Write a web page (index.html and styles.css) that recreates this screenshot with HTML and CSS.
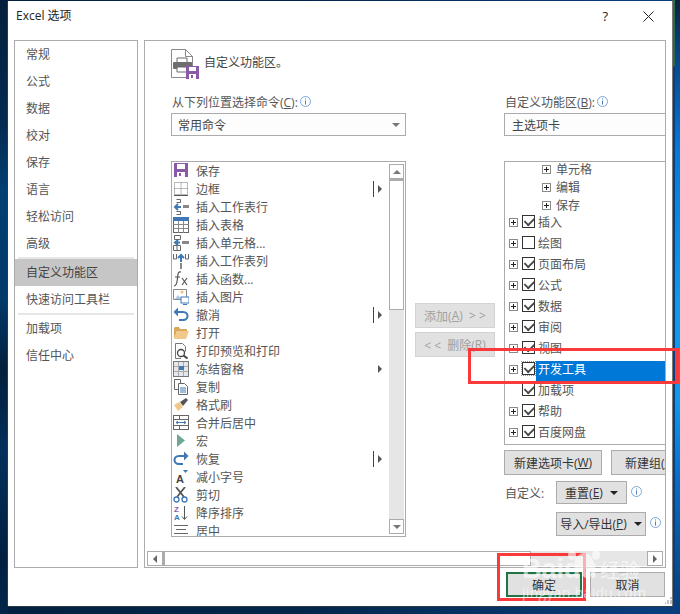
FILE: index.html
```html
<!DOCTYPE html>
<html lang="zh-CN">
<head>
<meta charset="utf-8">
<title>Excel 选项</title>
<link rel="stylesheet" href="styles.css">
</head>
<body>
<div class="window">
  <header class="titlebar">
    <span class="title">Excel 选项</span>
    <span class="help">?</span>
    <svg class="close" width="11" height="11" viewBox="0 0 11 11"><path d="M.5.5l10 10M10.500.5l-10 10" stroke="#222" fill="none"/></svg>
  </header>
  <div class="main">
    <nav class="nav">
      <div class="nav-item">常规</div>
      <div class="nav-item">公式</div>
      <div class="nav-item">数据</div>
      <div class="nav-item">校对</div>
      <div class="nav-item">保存</div>
      <div class="nav-item">语言</div>
      <div class="nav-item">轻松访问</div>
      <div class="nav-item">高级</div>
      <div class="nav-sep"></div>
      <div class="nav-item selected">自定义功能区</div>
      <div class="nav-item">快速访问工具栏</div>
      <div class="nav-sep"></div>
      <div class="nav-item">加载项</div>
      <div class="nav-item">信任中心</div>
    </nav>
    <section class="panel">
      <div class="heading">
        <svg width="28" height="30" viewBox="0 0 28 30"><path d="M.5.5h14l7 7v21H.5z" fill="#fff" stroke="#8a8a8a"/><path d="M14.500.5v7h7" fill="none" stroke="#8a8a8a"/><path d="M6 9h10v5H6z" fill="#fff" stroke="#6a6a6a"/><rect x="2" y="13" width="19" height="7" rx="1" fill="#6e6e6e"/><path d="M6 18h10v5H6z" fill="#fff" stroke="#6a6a6a"/><rect x="15" y="17" width="13" height="13" fill="#8a5aa8"/><rect x="18" y="18" width="7" height="4" fill="#fff"/><rect x="18" y="25" width="7" height="5" fill="#fff"/><rect x="20" y="26" width="2" height="3" fill="#8a5aa8"/></svg>
        <span>自定义功能区。</span>
      </div>
      <div class="columns">
        <div class="col-left">
          <div class="label">从下列位置选择命令(<u>C</u>):<svg class="info" width="11" height="11" viewBox="0 0 11 11"><circle cx="5.500" cy="5.500" r="5" fill="#fff" stroke="#7ba7d8"/><path d="M5.500 2.500v1M5.500 4.500v4" stroke="#4a7fbf"/></svg></div>
          <div class="select"><span>常用命令</span><i class="caret"></i></div>
          <div class="cmd-list">
            <div class="cmd-rows">
              <div class="cmd"><svg width="16" height="16" viewBox="0 0 16 16"><rect x="1" y="0" width="14" height="14" fill="#8a5aa8"/><rect x="4" y="1" width="8" height="5" fill="#fff"/><rect x="4" y="9" width="8" height="5" fill="#fff"/><rect x="6" y="10" width="2" height="3" fill="#8a5aa8"/></svg><span>保存</span></div>
              <div class="cmd"><svg width="16" height="16" viewBox="0 0 16 16"><path d="M1.500 1.500h13v12h-13zM8 1.500v12M1.500 7.500h13" fill="none" stroke="#777" stroke-dasharray="1 1"/><path d="M1 14.500h14" stroke="#555"/></svg><span>边框</span><i class="bar"></i><i class="arrow"></i></div>
              <div class="cmd"><svg width="16" height="16" viewBox="0 0 16 16"><path d="M3.500.5h4v3h-4M3.500 12.500h4v3h-4" fill="none" stroke="#666"/><path d="M8 8H2M5 5L2 8l3 3" fill="none" stroke="#3f78b5" stroke-width="2"/><rect x="10" y="6" width="6" height="3" fill="#888"/></svg><span>插入工作表行</span></div>
              <div class="cmd"><svg width="16" height="16" viewBox="0 0 16 16"><rect x=".5" y=".5" width="15" height="15" fill="#fff" stroke="#666"/><rect x="0" y="0" width="16" height="4" fill="#3f78b5"/><path d="M.5 7.500h15M.5 11.500h15M5.500 4v12M10.500 4v12" stroke="#888"/></svg><span>插入表格</span></div>
              <div class="cmd"><svg width="16" height="16" viewBox="0 0 16 16"><path d="M1.500.5h6v4h-6zM.5 10.500h7v5h-7zM4 10.500v5" fill="none" stroke="#666"/><path d="M7 7.500H2M5 5L2 7.500 5 10" fill="none" stroke="#3f78b5" stroke-width="2"/><rect x="9" y="6" width="7" height="3" fill="#888"/></svg><span>插入单元格...</span></div>
              <div class="cmd"><svg width="16" height="16" viewBox="0 0 16 16"><path d="M.5 1v5h3V1M12.500 1v5h3V1" fill="none" stroke="#666"/><path d="M8 9V2M5 5l3-3 3 3" fill="none" stroke="#3f78b5" stroke-width="2"/><rect x="7" y="10" width="2" height="6" fill="#888"/></svg><span>插入工作表列</span></div>
              <div class="cmd"><svg width="16" height="16" viewBox="0 0 16 16"><path d="M8 1C5 0 5 3 4.500 7 4 11 4 15 1 15M2 6h5" fill="none" stroke="#555" stroke-width="1.200"/><path d="M9 7l5 7M14 7l-5 7" stroke="#555" stroke-width="1.200"/></svg><span>插入函数...</span></div>
              <div class="cmd"><svg width="16" height="16" viewBox="0 0 16 16"><path d="M.5.5h13v10H.5z" fill="#fff" stroke="#888"/><path d="M2 10l3-4 3 4z" fill="#a9c4e4"/><circle cx="9" cy="3" r="1.500" fill="#f0c070"/><rect x="8" y="8" width="8" height="6" fill="#fff" stroke="#3f78b5"/><path d="M10 15.500h4" stroke="#3f78b5"/></svg><span>插入图片</span></div>
              <div class="cmd"><svg width="16" height="16" viewBox="0 0 16 16"><path d="M3 5h7c6 0 6 8 0 8H6" fill="none" stroke="#3f78b5" stroke-width="2"/><path d="M5 .5L.5 5 5 9.500V.5z" fill="#3f78b5"/></svg><span>撤消</span><i class="bar"></i><i class="arrow"></i></div>
              <div class="cmd"><svg width="16" height="16" viewBox="0 0 16 16"><path d="M1 14V3l1-1h4l1 2h7v2H4z" fill="#d9a95a"/><path d="M1 14l3-8h12l-3 8z" fill="#f0c98a"/></svg><span>打开</span></div>
              <div class="cmd"><svg width="16" height="16" viewBox="0 0 16 16"><path d="M8 15.500H2.500V.5h7l3 3v5" fill="#fff" stroke="#777"/><circle cx="8" cy="10" r="3.500" fill="#fff" stroke="#444" stroke-width="1.300"/><path d="M10.500 12.500l4 3" stroke="#444" stroke-width="2"/></svg><span>打印预览和打印</span></div>
              <div class="cmd"><svg width="16" height="16" viewBox="0 0 16 16"><rect x=".5" y=".5" width="15" height="15" fill="#e4e8ee" stroke="#777"/><path d="M5.500 1v14M10.500 1v14M1 5.500h14M1 10.500h14" stroke="#aaa"/><rect x="6" y="5" width="5" height="4" fill="#3f78b5"/></svg><span>冻结窗格</span><i class="arrow"></i></div>
              <div class="cmd"><svg width="16" height="16" viewBox="0 0 16 16"><path d="M1.500.5h6v10h-6z" fill="#fff" stroke="#666"/><path d="M5.500 4.500h6l3 3v8h-9z" fill="#fff" stroke="#666"/><path d="M7 9h6M7 11h6M7 13h6" stroke="#3f78b5"/></svg><span>复制</span></div>
              <div class="cmd"><svg width="16" height="16" viewBox="0 0 16 16"><path d="M1 8l5-3 4 5-5 4z" fill="#f0c98a"/><path d="M7 5l6-4 2 2-5 6z" fill="#555"/></svg><span>格式刷</span></div>
              <div class="cmd"><svg width="16" height="16" viewBox="0 0 16 16"><rect x=".5" y=".5" width="15" height="14" fill="#fff" stroke="#666"/><path d="M1 4.500h14M1 10.500h14M6.500 1v3M6.500 11v3" stroke="#666"/><path d="M3 7.500h10M5 6L3 7.500 5 9M11 6l2 1.500L11 9" fill="none" stroke="#3f78b5"/></svg><span>合并后居中</span></div>
              <div class="cmd"><svg width="16" height="16" viewBox="0 0 16 16"><path d="M4 1l8 6.500L4 14z" fill="#6fa890"/></svg><span>宏</span></div>
              <div class="cmd"><svg width="16" height="16" viewBox="0 0 16 16"><path d="M13 5H6C0 5 0 13 6 13h4" fill="none" stroke="#3f78b5" stroke-width="2"/><path d="M11 .5L15.500 5 11 9.500V.5z" fill="#3f78b5"/></svg><span>恢复</span><i class="bar"></i><i class="arrow"></i></div>
              <div class="cmd"><svg width="16" height="16" viewBox="0 0 16 16"><text x="3" y="14" class="glyph">A</text><path d="M10 1h5l-2.500 3z" fill="#3f78b5"/></svg><span>减小字号</span></div>
              <div class="cmd"><svg width="16" height="16" viewBox="0 0 16 16"><path d="M3 0l8 10M12 0L4 10" stroke="#555" stroke-width="1.800"/><circle cx="3.500" cy="12.500" r="2.500" fill="none" stroke="#3f78b5" stroke-width="1.300"/><circle cx="11.500" cy="12.500" r="2.500" fill="none" stroke="#3f78b5" stroke-width="1.300"/></svg><span>剪切</span></div>
              <div class="cmd"><svg width="16" height="16" viewBox="0 0 16 16"><text x="1" y="7" class="glyph small violet">Z</text><text x="1" y="15" class="glyph small blue">A</text><path d="M11.500 1v13M9 11.500l2.500 3 2.500-3" fill="none" stroke="#555"/></svg><span>降序排序</span></div>
              <div class="cmd"><svg width="16" height="16" viewBox="0 0 16 16"><path d="M1 2.500h14M3 6.500h10M1 10.500h14M3 14.500h10" stroke="#666"/></svg><span>居中</span></div>
            </div>
            <div class="vscroll">
              <div class="sb-btn"><i class="tri up"></i></div>
              <div class="sb-thumb"></div>
              <div class="sb-track"></div>
              <div class="sb-btn"><i class="tri down"></i></div>
            </div>
          </div>
        </div>
        <div class="col-mid">
          <div class="mid-btn">添加(<u>A</u>) &nbsp;&gt; &gt;</div>
          <div class="mid-btn">&lt; &lt; &nbsp;删除(<u>R</u>)</div>
        </div>
        <div class="col-right">
          <div class="label">自定义功能区(<u>B</u>):<svg class="info" width="11" height="11" viewBox="0 0 11 11"><circle cx="5.500" cy="5.500" r="5" fill="#fff" stroke="#7ba7d8"/><path d="M5.500 2.500v1M5.500 4.500v4" stroke="#4a7fbf"/></svg></div>
          <div class="select open"><span>主选项卡</span></div>
          <div class="tree">
            <div class="sub first"><i class="plus"></i><span>单元格</span></div>
            <div class="sub"><i class="plus"></i><span>编辑</span></div>
            <div class="sub"><i class="plus"></i><span>保存</span></div>
            <div class="node"><i class="plus"></i><i class="check on"></i><span>插入</span></div>
            <div class="node"><i class="plus"></i><i class="check"></i><span>绘图</span></div>
            <div class="node"><i class="plus"></i><i class="check on"></i><span>页面布局</span></div>
            <div class="node"><i class="plus"></i><i class="check on"></i><span>公式</span></div>
            <div class="node"><i class="plus"></i><i class="check on"></i><span>数据</span></div>
            <div class="node"><i class="plus"></i><i class="check on"></i><span>审阅</span></div>
            <div class="node"><i class="plus"></i><i class="check on"></i><span>视图</span></div>
            <div class="node active"><i class="plus"></i><i class="check on"></i><span>开发工具</span></div>
            <div class="node"><i class="plus none"></i><i class="check on"></i><span>加载项</span></div>
            <div class="node"><i class="plus"></i><i class="check on"></i><span>帮助</span></div>
            <div class="node"><i class="plus"></i><i class="check on"></i><span>百度网盘</span></div>
          </div>
          <div class="btn-row">
            <div class="btn wide">新建选项卡(<u>W</u>)</div>
            <div class="btn cut">新建组(<u>N</u>)</div>
          </div>
          <div class="custom-row">
            <span class="custom-label">自定义:</span>
            <div class="btn small">重置(<u>E</u>)<i class="black-caret"></i></div>
            <svg class="info raised" width="11" height="11" viewBox="0 0 11 11"><circle cx="5.500" cy="5.500" r="5" fill="#fff" stroke="#7ba7d8"/><path d="M5.500 2.500v1M5.500 4.500v4" stroke="#4a7fbf"/></svg>
          </div>
          <div class="custom-row second">
            <div class="btn large">导入/导出(<u>P</u>)<i class="black-caret"></i></div>
            <svg class="info raised" width="11" height="11" viewBox="0 0 11 11"><circle cx="5.500" cy="5.500" r="5" fill="#fff" stroke="#7ba7d8"/><path d="M5.500 2.500v1M5.500 4.500v4" stroke="#4a7fbf"/></svg>
          </div>
        </div>
      </div>
      <div class="hscroll">
        <div class="sb-btn h"><i class="tri left"></i></div>
        <div class="h-thumb"></div>
        <div class="h-track"></div>
        <div class="sb-btn h"><i class="tri right"></i></div>
      </div>
    </section>
  </div>
  <footer class="footer">
    <div class="foot-btn default">确定</div>
    <div class="foot-btn">取消</div>
  </footer>
  <svg class="grip" width="7" height="7" viewBox="0 0 7 7"><path d="M5 0h2v2H5zM2 3h2v2H2zM5 3h2v2H5zM0 5h1v2H0zM2 5h2v2H2zM5 5h2v2H5z" fill="#c4c4c4"/></svg>
  <div class="mark mark-row"></div>
  <div class="mark mark-ok"></div>
  <div class="watermark">
    <svg width="36" height="30" viewBox="0 0 36 30"><g fill="#fff"><ellipse cx="7" cy="15" rx="4" ry="5"/><ellipse cx="14" cy="6" rx="4" ry="5"/><ellipse cx="24" cy="6" rx="4" ry="5"/><ellipse cx="31" cy="15" rx="4" ry="5"/><path d="M19 13c5 0 10 6 10 11s-5 5-10 4c-5 1-10 1-10-4s5-11 10-11z"/></g></svg>
    <div class="wm-line"><b>Baidu</b><span>经验</span></div>
    <div class="wm-url">jingyan.baidu.com</div>
  </div>
</div>
</body>
</html>
```

FILE: styles.css
```css
* { box-sizing: border-box; }
html, body { margin: 0; height: 100%; }
body {
  width: 680px;
  height: 614px;
  overflow: hidden;
  padding: 1px 8px 0 8px;
  background:
    linear-gradient(180deg, #0b2238 0, #0a3f7a 45px, #0878d8 150px, #0e9ae8 300px, #0e9ae8 400px, #0a6cc4 480px, #0a4f90 560px, #083c78 614px) right top / 5px 100% no-repeat,
    linear-gradient(180deg, #2a6a48 0, #2a6a48 66px, transparent 67px) right top / 8px 100% no-repeat,
    linear-gradient(180deg, #04203c 0, #032a50 120px, #023f72 190px, #023a6a 300px, #021f3c 370px, #03305c 450px, #01203f 560px, #02264a 614px) left top / 8px 100% no-repeat,
    linear-gradient(90deg, #01203f 0, #02264a 300px, #0a3f80 680px);
  font-family: "Open Sans", "Noto Sans CJK SC", sans-serif;
  font-size: 12px;
  color: #444;
}
u { text-decoration: underline; text-underline-offset: 1px; }

.window {
  position: relative;
  width: 664px;
  height: 605px;
  background: #fff;
  box-shadow: -1px 0 0 #2c3a44, 0 1px 0 #2c3a44, 1px 0 0 #777;
}
.titlebar { height: 39px; display: flex; align-items: center; padding: 0 18px 9px 8px; color: #222; }
.title { flex: 1; line-height: 30px; }
.help { margin-right: 35px; font-size: 13px; }

.main { display: flex; gap: 6px; padding-left: 6px; height: 528px; }
.nav { width: 124px; border: 1px solid #ababab; }
.nav-item { height: 27px; line-height: 27px; padding-left: 11px; color: #555; }
.nav-sep { height: 2px; background: #e6e6e6; margin: 0 3px; }
.nav-item.selected { background: #c6c6c6; color: #444; }
.panel { width: 522px; border: 1px solid #ababab; display: flex; flex-direction: column; overflow: hidden; }

.heading { display: flex; align-items: flex-start; gap: 5px; height: 47px; padding: 8px 0 0 26px; flex: none; }
.heading span { line-height: 28px; }
.heading svg { flex: none; }
.columns { display: flex; height: 460px; padding-top: 5px; padding-left: 26px; flex: none; }
.col-left { width: 235px; flex: none; }
.col-mid { width: 98px; flex: none; padding: 210px 0 0 9px; display: flex; flex-direction: column; gap: 4px; }
.col-right { width: 161px; flex: none; }

.label { height: 20px; line-height: 20px; display: flex; align-items: center; color: #555; white-space: nowrap; padding-left: 1px; }
.info { margin-left: 2px; margin-top: -4px; flex: none; }
.info.raised { margin-left: 4px; margin-top: -3px; }
.select { height: 23px; border: 1px solid #ababab; display: flex; align-items: center; padding-left: 6px; justify-content: space-between; padding-right: 4px; background: #fdfdfd; }
.select.open { border-right: 0; padding-left: 7px; }
.caret { width: 0; height: 0; border: 4px solid transparent; border-top: 4px solid #777; border-bottom: 0; margin-right: 1px; }

.cmd-list { margin-top: 25px; height: 376px; border: 1px solid #ababab; display: flex; overflow: hidden; }
.cmd-rows { flex: 1; min-width: 0; }
.cmd { height: 18px; display: flex; align-items: center; position: relative; padding-left: 1px; color: #555; }
.cmd svg { flex: none; margin-right: 7px; }
.glyph { font: bold 11px "Liberation Sans", sans-serif; fill: #444; }
.glyph.small { font-size: 8px; }
.glyph.violet { fill: #8a5aa8; }
.glyph.blue { fill: #3f78b5; }
.bar { position: absolute; left: 201px; top: 1px; width: 1px; height: 16px; background: #444; }
.arrow { position: absolute; left: 206px; top: 5px; width: 0; height: 0; border: 4px solid transparent; border-left: 4px solid #555; border-right: 0; }
.vscroll { width: 15px; flex: none; display: flex; flex-direction: column; margin-right: 1px; padding: 2px 0; }
.sb-btn { height: 15px; width: 15px; border: 1px solid #ababab; display: flex; align-items: center; justify-content: center; background: #fff; flex: none; }
.sb-thumb { height: 131px; width: 15px; border: 1px solid #ababab; border-top-width: 2px; background: #fff; flex: none; }
.sb-track { flex: 1; width: 15px; background: #e6e6e6; }
.tri { width: 0; height: 0; border: 4px solid transparent; display: block; }
.tri.up { border-bottom: 4px solid #777; border-top: 0; }
.tri.down { border-top: 4px solid #777; border-bottom: 0; }
.tri.left { border-right: 4px solid #666; border-left: 0; }
.tri.right { border-left: 4px solid #666; border-right: 0; }

.mid-btn { width: 80px; height: 25px; border: 1px solid #d3d3d3; background: #e1e1e1; color: #a0a0a0; display: flex; align-items: center; justify-content: center; white-space: pre; }

.tree { margin-top: 25px; height: 284px; border: 1px solid #ababab; border-right: 0; overflow: hidden; }
.sub, .node { display: flex; color: #555; white-space: nowrap; }
.sub { height: 18px; padding-left: 37px; gap: 5px; align-items: center; }
.sub.first { margin-top: -2px; }
.node { height: 21px; padding-left: 4px; align-items: flex-start; }
.node span { line-height: 18px; }
.plus { width: 9px; height: 9px; border: 1px solid #8a8a8a; background: linear-gradient(#222,#222) center / 5px 1px no-repeat, linear-gradient(#222,#222) center / 1px 5px no-repeat, #fff; flex: none; }
.node .plus { margin-top: 4px; }
.plus.none { visibility: hidden; }
.check { width: 13px; height: 13px; border: 1px solid #333; margin: 1px 3px 0 4px; flex: none; background: #fff; position: relative; }
.check.on::after { content: ""; position: absolute; left: 1px; top: 1px; width: 9px; height: 5px; border-left: 2px solid #444; border-bottom: 2px solid #444; transform: rotate(-45deg) scale(.9); }
.node.active { background: linear-gradient(#0078d7, #0078d7) 31px 0 / 100% 100% no-repeat; }
.node.active span { color: #fff; }
.node.active .check { outline: 1px dotted #e08a1e; }

.btn-row { display: flex; gap: 9px; margin-top: 5px; white-space: nowrap; }
.btn { border: 1px solid #ababab; background: #e1e1e1; color: #333; display: flex; align-items: center; justify-content: center; white-space: nowrap; flex: none; }
.btn.wide { width: 98px; height: 25px; }
.btn.cut { width: 80px; height: 25px; }
.custom-row { display: flex; align-items: center; margin-top: 6px; height: 23px; }
.custom-label { width: 52px; padding-left: 1px; color: #555; }
.custom-row.second { margin-top: 8px; padding-left: 52px; }
.btn.small { width: 71px; height: 23px; }
.btn.large { width: 90px; height: 24px; }
.black-caret { width: 0; height: 0; margin-left: 7px; border: 4px solid transparent; border-top: 4px solid #222; border-bottom: 0; }

.hscroll { display: flex; height: 15px; margin: 3px 2px 0 2px; flex: none; }
.sb-btn.h { height: 15px; width: 16px; }
.h-thumb { width: 368px; border: 1px solid #ababab; border-left-width: 2px; background: #fff; }
.h-track { flex: 1; background: #e6e6e6; }

.footer { display: flex; justify-content: flex-end; gap: 8px; padding: 4px 7px 0 0; }
.foot-btn { width: 75px; height: 25px; border: 1px solid #ababab; background: #e1e1e1; color: #333; display: flex; align-items: center; justify-content: center; }
.foot-btn.default { width: 76px; border: 2px solid #217346; }

.grip { position: absolute; right: 0; bottom: 2px; }

.watermark { position: absolute; left: 514px; top: 538px; width: 125px; height: 62px; opacity: .6; color: #fff; }
.watermark svg { position: absolute; left: 43px; top: 1px; }
.wm-line { position: absolute; left: 0; top: 15px; display: flex; align-items: center; gap: 3px; white-space: nowrap; }
.wm-line b { font: bold 27px "Liberation Sans", sans-serif; }
.wm-line span { font: 20px "Noto Sans CJK SC", sans-serif; }
.wm-url { position: absolute; left: 0; top: 44px; font: 14px "Open Sans", sans-serif; white-space: nowrap; letter-spacing: .3px; }

.mark { position: absolute; border: 3px solid #f93a3a; pointer-events: none; }
.mark-row { left: 460px; top: 347px; width: 211px; height: 36px; }
.mark-ok { left: 489px; top: 552px; width: 89px; height: 48px; }
```
